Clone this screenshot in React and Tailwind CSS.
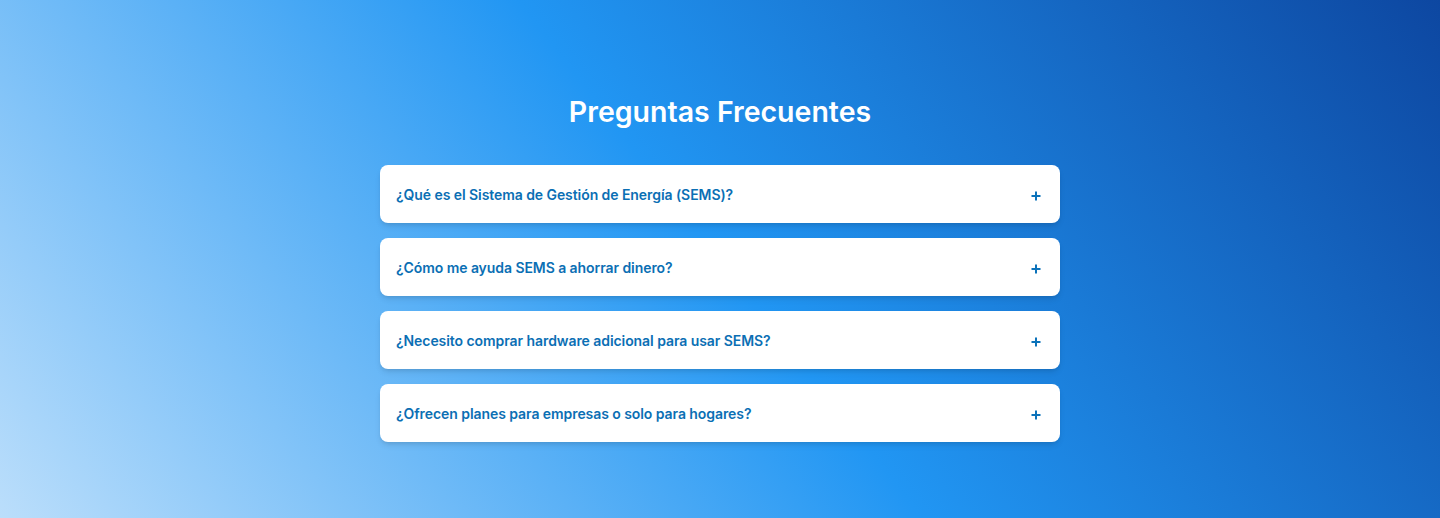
import { useState } from "react";

const faqs = [
  {
    q: "¿Qué es el Sistema de Gestión de Energía (SEMS)?",
    a: "SEMS es una plataforma que monitorea y optimiza el consumo de energía de tu hogar o empresa en tiempo real.",
  },
  {
    q: "¿Cómo me ayuda SEMS a ahorrar dinero?",
    a: "Detecta consumos innecesarios y te sugiere ajustes para reducir tu factura eléctrica.",
  },
  {
    q: "¿Necesito comprar hardware adicional para usar SEMS?",
    a: "No siempre. SEMS se integra con muchos medidores inteligentes existentes.",
  },
  {
    q: "¿Ofrecen planes para empresas o solo para hogares?",
    a: "Tenemos planes para hogares, pymes y grandes empresas.",
  },
];

function PlusIcon() {
  return (
    <svg width="10" height="10" viewBox="0 0 10 10" fill="none" className="mt-[3px] shrink-0">
      <path d="M5 0.5v9M0.5 5h9" stroke="#0b72ba" strokeWidth="2" />
    </svg>
  );
}

export default function App() {
  const [open, setOpen] = useState(null);

  return (
    <section
      className="min-h-[518px] w-full bg-[linear-gradient(52deg,#bbdefb_0%,#2196f3_50%,#0d47a1_100%)] pt-[94px] pb-16"
      style={{ fontFamily: "Inter, 'Noto Sans', sans-serif" }}
    >
      <div className="mx-auto w-[680px]">
        <h2 className="mb-[35px] text-center text-[28.5px] leading-9 font-semibold text-white">
          Preguntas Frecuentes
        </h2>

        <div className="flex flex-col gap-[15px]">
          {faqs.map((item, idx) => (
            <div key={idx} className="rounded-lg bg-white shadow-md">
              <button
                onClick={() => setOpen(open === idx ? null : idx)}
                className="flex h-[58px] w-full items-center justify-between pl-4 pr-[19px] text-left"
              >
                <span className="pt-[1px] text-sm font-semibold tracking-[-0.005em] text-[#0b6fb4]">
                  {item.q}
                </span>
                <PlusIcon />
              </button>
              {open === idx && (
                <p className="px-4 pb-4 text-sm text-gray-600">{item.a}</p>
              )}
            </div>
          ))}
        </div>
      </div>
    </section>
  );
}
